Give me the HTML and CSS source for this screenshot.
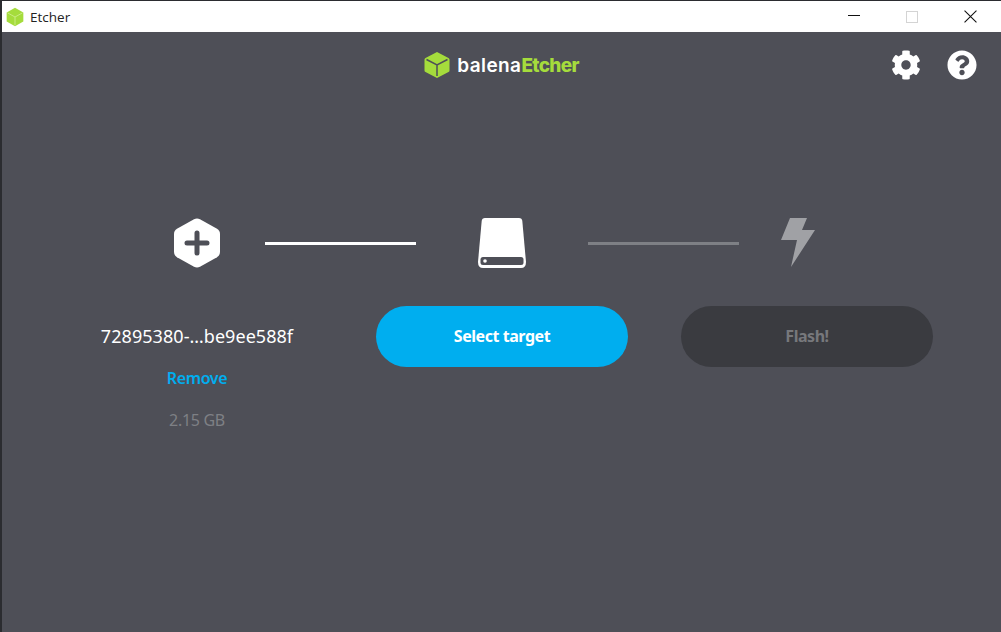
FILE: index.html
```html
<!DOCTYPE html>
<html lang="en">
<head>
<meta charset="utf-8">
<title>Etcher</title>
<link rel="stylesheet" href="styles.css">
</head>
<body>
<div class="window">
  <div class="titlebar">
    <svg class="app-icon" viewBox="0 0 24 24"><path d="M12 1 22 6.500V17.500L12 23 2 17.500V6.500Z" fill="#a5dc3c"/><path d="M3 7 12 12 21 7M12 12V22" fill="none" stroke="#c9ec82" stroke-width="1.2"/></svg>
    <span class="app-name">Etcher</span>
    <div class="win-controls">
      <span class="win-btn"><span class="win-min"></span></span>
      <span class="win-btn"><span class="win-max"></span></span>
      <span class="win-btn">
        <svg class="win-close" viewBox="0 0 12 12"><path d="M.5.5 11.500 11.500M11.500.5.5 11.500" fill="none" stroke="#111" stroke-width="1"/></svg>
      </span>
    </div>
  </div>
  <header class="app-header">
    <div class="logo">
      <svg class="logo-cube" viewBox="0 0 26 28"><path d="M13 1 24.500 7Q25.500 7.500 25.500 8.500V19.500Q25.500 20.500 24.500 21L13 27 1.500 21Q.5 20.500 .5 19.500V8.500Q.5 7.500 1.500 7Z" fill="#a5dc3c"/><path d="M2.500 8.500 13 14 23.500 8.500M13 14V25" fill="none" stroke="#4e4f57" stroke-width="1.500"/></svg>
      <span class="logo-text">balena<span class="logo-accent">Etcher</span></span>
    </div>
    <div class="header-actions">
      <svg class="icon-gear" viewBox="0 0 512 512"><path fill="#fff" d="M487.4 315.7l-42.6-24.6c4.3-23.2 4.3-47 0-70.2l42.6-24.6c4.9-2.8 7.1-8.6 5.5-14-11.1-35.6-30-67.8-54.7-94.6-3.8-4.1-10-5.1-14.8-2.3L380.8 110c-17.9-15.4-38.5-27.3-60.8-35.1V25.800c0-5.600-3.900-10.500-9.400-11.700-36.700-8.200-74.300-7.800-109.200 0-5.500 1.200-9.400 6.100-9.400 11.700V75c-22.200 7.900-42.800 19.800-60.800 35.100L88.700 85.500c-4.900-2.800-11-1.900-14.800 2.300-24.700 26.700-43.600 58.900-54.700 94.600-1.700 5.400.6 11.200 5.500 14L67.300 221c-4.300 23.200-4.300 47 0 70.200l-42.600 24.600c-4.900 2.800-7.100 8.600-5.500 14 11.100 35.600 30 67.800 54.700 94.600 3.800 4.100 10 5.100 14.800 2.300l42.600-24.600c17.900 15.400 38.500 27.300 60.800 35.100v49.200c0 5.600 3.900 10.500 9.400 11.700 36.700 8.200 74.300 7.800 109.200 0 5.500-1.200 9.400-6.100 9.400-11.700v-49.200c22.200-7.900 42.800-19.800 60.800-35.100l42.600 24.600c4.900 2.800 11 1.900 14.800-2.300 24.700-26.700 43.600-58.900 54.700-94.600 1.500-5.500-.7-11.300-5.600-14.100zM256 336c-44.100 0-80-35.900-80-80s35.900-80 80-80 80 35.900 80 80-35.900 80-80 80z"/></svg>
      <svg class="icon-help" viewBox="0 0 512 512"><path fill="#fff" d="M504 256c0 136.997-111.043 248-248 248S8 392.997 8 256C8 119.083 119.043 8 256 8s248 111.083 248 248zM262.655 90c-54.497 0-89.255 22.957-116.549 63.758-3.536 5.286-2.353 12.415 2.715 16.258l34.699 26.31c5.205 3.947 12.621 3.008 16.665-2.122 17.864-22.658 30.113-35.797 57.303-35.797 20.429 0 45.698 13.148 45.698 32.958 0 14.976-12.363 22.667-32.534 33.976C247.128 238.528 216 254.941 216 296v4c0 6.627 5.373 12 12 12h56c6.627 0 12-5.373 12-12v-1.333c0-28.462 83.186-29.647 83.186-106.667 0-58.002-60.165-102-116.531-102zM256 338c-25.365 0-46 20.635-46 46 0 25.364 20.635 46 46 46s46-20.636 46-46c0-25.365-20.635-46-46-46z"/></svg>
    </div>
  </header>
  <main class="steps">
    <div class="icon-row">
      <div class="icon-cell icon-cell-end">
        <svg class="step-icon" viewBox="0 0 46 50"><path d="M20 1.200Q23 -.3 26 1.200L43 10.800Q46 12.500 46 16V34Q46 37.500 43 39.200L26 48.800Q23 50.300 20 48.800L3 39.200Q0 37.500 0 34V16Q0 12.500 3 10.800Z" fill="#fff"/><path d="M23 15V35M13 25H33" stroke="#4e4f57" stroke-width="5" stroke-linecap="round"/></svg>
      </div>
      <div class="connector connector-done"></div>
      <div class="icon-cell icon-cell-mid">
        <svg class="step-icon" viewBox="0 0 48 50"><path d="M7 0H41Q44 0 44.300 3L48 44Q48 50 43 50H5Q0 50 0 44L3.700 3Q4 0 7 0Z" fill="#fff"/><rect x="2.500" y="39" width="43" height="8" rx="2.500" fill="#4e4f57"/><circle cx="7" cy="43" r="1.800" fill="#fff"/></svg>
      </div>
      <div class="connector connector-todo"></div>
      <div class="icon-cell icon-cell-end">
        <svg class="step-icon step-icon-bolt" viewBox="0 0 34 50"><path d="M9 0H26L21 12H34L10 49 16 22H0Z" fill="#a0a1a5"/></svg>
      </div>
    </div>
    <div class="action-row">
      <div class="action-col">
        <div class="file-name">72895380-…be9ee588f</div>
        <div class="file-remove">Remove</div>
        <div class="file-size">2.15 GB</div>
      </div>
      <div class="action-col">
        <div class="btn btn-primary"><span class="btn-label">Select target</span></div>
      </div>
      <div class="action-col">
        <div class="btn btn-disabled"><span class="btn-label">Flash!</span></div>
      </div>
    </div>
  </main>
</div>
</body>
</html>
```
FILE: styles.css
```css
* { box-sizing: border-box; }
html, body { margin: 0; height: 100%; }
body { background: #4e4f57; font-family: "Noto Sans", sans-serif; overflow: hidden; }
.window { width: 1001px; height: 632px; display: flex; flex-direction: column; border-left: 2px solid #2b2c30; background: #4e4f57; }
.titlebar { height: 32px; flex: none; display: flex; align-items: center; background: #fff; border-top: 1px solid #2b2c30; padding-left: 3px; }
.app-icon { width: 20px; height: 20px; margin-right: 5px; }
.app-name { font: 13.500px "Open Sans", sans-serif; color: #222; }
.win-controls { margin-left: auto; margin-right: 2px; display: flex; }
.win-btn { width: 58px; height: 31px; display: flex; align-items: center; justify-content: center; }
.win-min { width: 12px; height: 1px; background: #111; margin-bottom: 3px; }
.win-max { width: 12px; height: 12px; border: 1px solid #d4d4d4; }
.win-close { width: 13px; height: 13px; }
.app-header { height: 66px; flex: none; display: flex; align-items: center; justify-content: center; position: relative; }
.logo { display: flex; align-items: center; gap: 7px; }
.logo-cube { width: 26px; height: 28px; }
.logo-text { font: 600 19px "Inter", sans-serif; color: #fff; letter-spacing: .4px; }
.logo-accent { color: #a5dc3c; font-weight: 800; letter-spacing: -.7px; }
.header-actions { position: absolute; right: 24px; top: 18px; display: flex; align-items: center; gap: 26px; }
.icon-gear { width: 30px; height: 30px; display: block; }
.icon-help { width: 30px; height: 30px; display: block; }
.steps { padding-top: 120px; }
.icon-row { display: flex; align-items: center; padding-left: 127px; height: 50px; }
.icon-cell { display: flex; justify-content: center; align-items: center; }
.icon-cell-end { width: 136px; }
.icon-cell-mid { width: 172px; }
.step-icon { height: 50px; display: block; }
.step-icon-bolt { margin-right: 18px; }
.connector { width: 151px; height: 3px; }
.connector-done { background: #fff; }
.connector-todo { background: #7e8085; }
.action-row { display: grid; grid-template-columns: repeat(3, 305px); padding-left: 42.500px; padding-top: 38px; }
.action-col { display: flex; flex-direction: column; align-items: center; }
.file-name { font-size: 18px; line-height: 24px; color: #fff; margin-top: 18px; letter-spacing: .05px; }
.file-remove { font-size: 16px; font-weight: 600; line-height: 22px; color: #00aeef; margin-top: 19px; letter-spacing: -.35px; }
.file-size { font-size: 16px; line-height: 22px; color: #7e8085; margin-top: 20px; letter-spacing: -.3px; }
.btn { width: 252px; height: 61px; border-radius: 31px; display: flex; align-items: center; justify-content: center; font-size: 16px; font-weight: 700; letter-spacing: -.45px; }
.btn-label { margin-top: -2px; }
.btn-primary { background: #00aeef; color: #fff; }
.btn-disabled { background: #3a3b40; color: #77787c; }
```
